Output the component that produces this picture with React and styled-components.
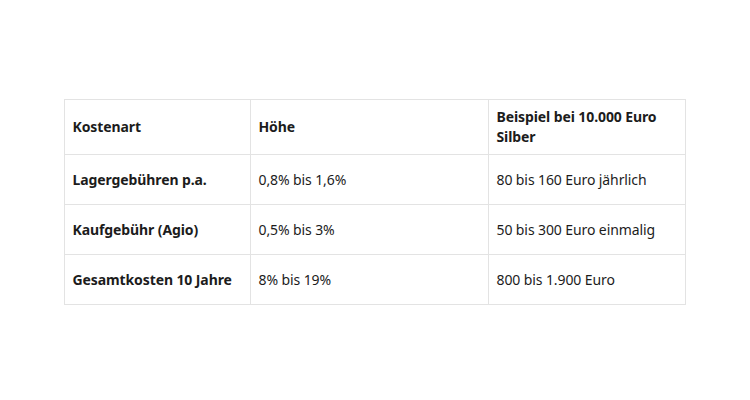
import React from "react";
import styled, { createGlobalStyle } from "styled-components";

const GlobalStyle = createGlobalStyle`
  html, body {
    margin: 0;
    padding: 0;
    background: #ffffff;
  }
  body {
    font-family: "Noto Sans", "Open Sans", sans-serif;
    color: #1c1c1c;
  }
`;

const Page = styled.div`
  width: 750px;
  height: 400px;
  display: flex;
  justify-content: center;
  padding-top: 99px;
  box-sizing: border-box;
`;

const Table = styled.table`
  border-collapse: collapse;
  width: 621px;
  height: fit-content;
  table-layout: fixed;
  font-size: 14px;
  line-height: 20px;
  margin-left: -1px;
`;

const Row = styled.tr`
  height: ${p => (p.$head ? "55px" : "50px")};
`;

const Cell = styled.td`
  border: 1px solid #e3e3e3;
  padding: 6px 8px;
  vertical-align: middle;
  font-weight: ${p => (p.$bold ? 700 : 400)};
  letter-spacing: -0.1px;
`;

const rows = [
  ["Lagergebühren p.a.", "0,8% bis 1,6%", "80 bis 160 Euro jährlich"],
  ["Kaufgebühr (Agio)", "0,5% bis 3%", "50 bis 300 Euro einmalig"],
  ["Gesamtkosten 10 Jahre", "8% bis 19%", "800 bis 1.900 Euro"],
];

export default function App() {
  return (
    <>
      <GlobalStyle />
      <Page>
        <Table>
          <colgroup>
            <col style={{ width: 186 }} />
            <col style={{ width: 238 }} />
            <col style={{ width: 197 }} />
          </colgroup>
          <tbody>
            <Row $head>
              <Cell $bold>Kostenart</Cell>
              <Cell $bold>Höhe</Cell>
              <Cell $bold>Beispiel bei 10.000 Euro Silber</Cell>
            </Row>
            {rows.map(r => (
              <Row key={r[0]}>
                <Cell $bold>{r[0]}</Cell>
                <Cell>{r[1]}</Cell>
                <Cell>{r[2]}</Cell>
              </Row>
            ))}
          </tbody>
        </Table>
      </Page>
    </>
  );
}
